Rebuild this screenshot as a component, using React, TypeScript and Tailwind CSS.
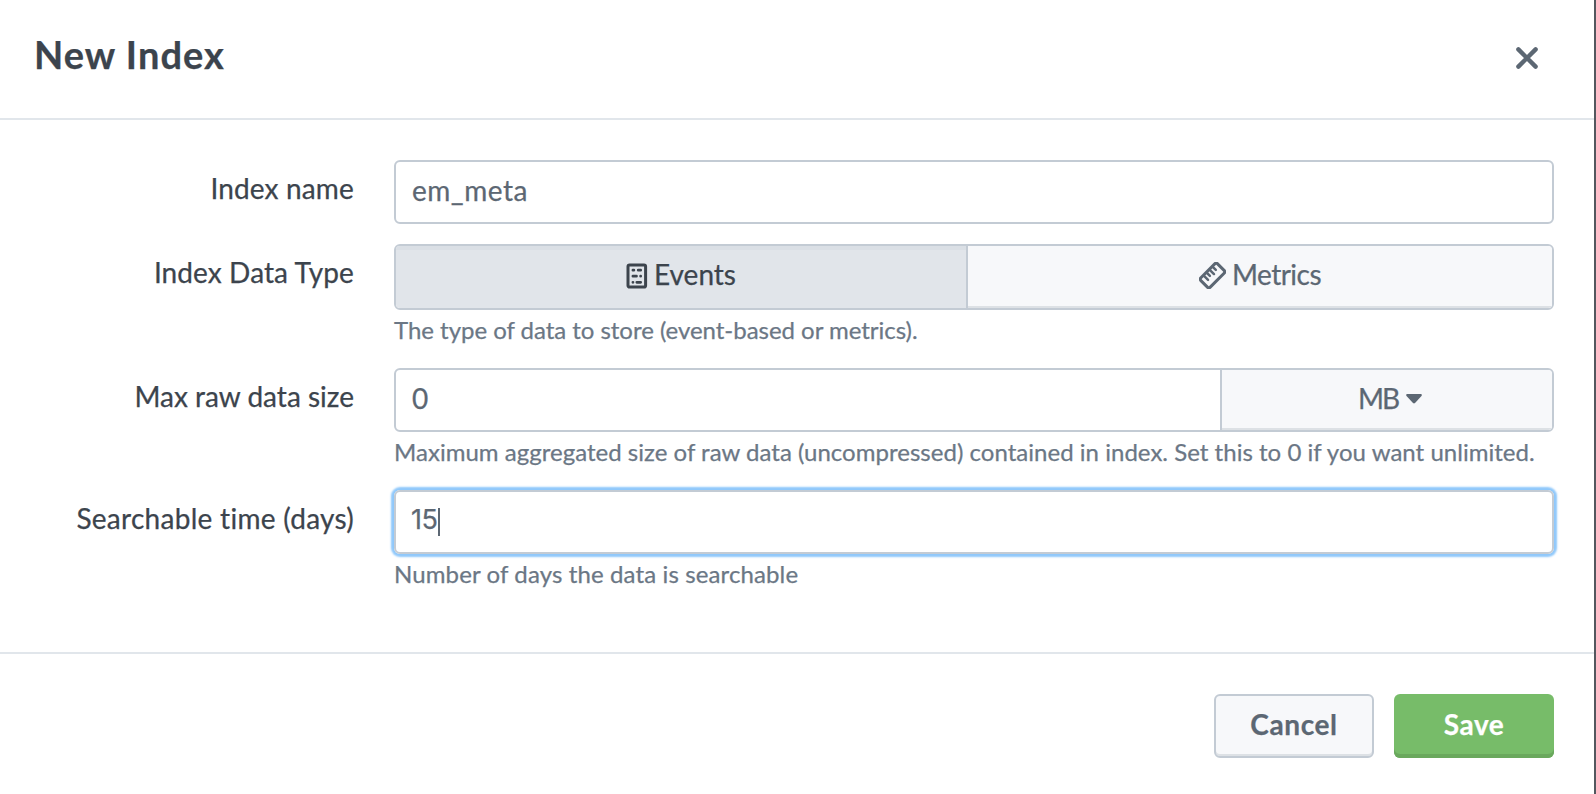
import type { ReactNode } from "react";

function EventsIcon() {
  return (
    <svg width="22" height="26" viewBox="0 0 22 26" fill="none" stroke="currentColor" className="mb-[3px] shrink-0">
      <rect x="2" y="1.9" width="17.6" height="22.2" rx="1.6" strokeWidth="3" />
      <g strokeWidth="2.7" strokeLinecap="round">
        <path d="M6.9 7.2h1M12.2 7.2h2.5M6.9 13.2h3.6M14.6 13.2h.1M6.9 19.3h.1M10.8 19.3h3.9" />
      </g>
    </svg>
  );
}

function MetricsIcon() {
  return (
    <svg width="27" height="27" viewBox="0 0 27 27" fill="none" stroke="currentColor" className="mb-[3px] shrink-0">
      <g transform="rotate(-45 13.5 13.5)">
        <rect x="1.7" y="6.9" width="23.6" height="13.2" rx="2" strokeWidth="3" />
        <path d="M7.2 7.5v6M11.4 7.5v4.4M15.6 7.5v6M19.8 7.5v4.4" strokeWidth="2.5" strokeLinecap="round" />
      </g>
    </svg>
  );
}

function Row({ label, labelClass, help, helpClass, children }: { label: string; labelClass: string; help?: string; helpClass?: string; children: ReactNode }) {
  return (
    <div className="flex">
      <div className="mr-10 w-[354px] shrink-0 whitespace-nowrap text-right leading-[56px] text-[#3c444d]">
        <span className={labelClass}>{label}</span>
      </div>
      <div className="w-[1160px] shrink-0">
        {children}
        {help && (
          <p className={`h-[38px] whitespace-nowrap text-2xl leading-[39px] text-[#6b7785] ${helpClass}`}>{help}</p>
        )}
      </div>
    </div>
  );
}

export default function App() {
  return (
    <div className="flex h-[794px] w-[1596px] overflow-hidden border-r-2 border-[#53575e] bg-white font-['Lato',sans-serif] text-[28px] text-[#5c6773] [-webkit-text-stroke:0.25px] [font-variant-ligatures:none]">
      <div className="flex w-full flex-col">
        <header className="flex h-[120px] shrink-0 items-start justify-between border-b-2 border-[#e1e6eb] pl-[34px] pr-14">
          <h1 className="pt-[30px] text-[38px] font-bold leading-[48px] tracking-[1.05px] text-[#3c444d]">New Index</h1>
          <button aria-label="Close" className="mt-[47px]">
            <svg width="22" height="22" viewBox="0 0 22 22" stroke="currentColor" strokeWidth="4.4" strokeLinecap="round">
              <path d="M2.4 2.4l17.2 17.2M19.6 2.4L2.4 19.6" />
            </svg>
          </button>
        </header>

        <main className="flex h-[534px] shrink-0 flex-col gap-5 border-b-2 border-[#e1e6eb] pt-10">
          <Row label="Index name" labelClass="tracking-[0.15px]">
            <div className="flex h-16 items-center rounded-md border-2 border-[#c3cbd4] px-4 pb-[5px] tracking-[0.5px]">em_meta</div>
          </Row>

          <Row label="Index Data Type" labelClass="tracking-[0.1px]" help="The type of data to store (event-based or metrics)." helpClass="tracking-[-0.03px]">
            <div className="flex h-[66px] overflow-hidden rounded-md border-2 border-[#c3cbd4]">
              <button className="flex w-[570px] items-center justify-center gap-1.5 bg-[#e1e5ea] text-[#3c444d] shadow-[inset_0_4px_0_#dadfe5]">
                <EventsIcon />
                <span className="pb-[6px]">Events</span>
              </button>
              <button className="flex flex-1 items-center justify-center gap-1.5 border-l-2 border-[#c3cbd4] bg-[#f7f8fa] shadow-[inset_0_-2px_0_#dde1e5]">
                <MetricsIcon />
                <span className="pb-[6px] tracking-[-0.5px]">Metrics</span>
              </button>
            </div>
          </Row>

          <Row
            label="Max raw data size"
            labelClass="tracking-[0px]"
            help="Maximum aggregated size of raw data (uncompressed) contained in index. Set this to 0 if you want unlimited."
            helpClass="tracking-[0.025px]"
          >
            <div className="flex h-16 overflow-hidden rounded-md border-2 border-[#c3cbd4]">
              <div className="flex flex-1 items-center px-4 pb-[5px]">0</div>
              <button className="flex w-[332px] items-center justify-center gap-2 border-l-2 border-[#c3cbd4] bg-[#f7f8fa] pl-1.5 shadow-[inset_0_-2px_0_#dde1e5]">
                <span className="pb-[5px] tracking-[-2px]">MB</span>
                <svg width="16" height="10" viewBox="0 0 16 10" fill="currentColor" className="mb-0.5">
                  <path d="M1.4 0h13.2c1.1 0 1.6 1.1.9 1.9L9 9c-.6.6-1.4.6-2 0L.5 1.9C-.2 1.1.3 0 1.4 0z" />
                </svg>
              </button>
            </div>
          </Row>

          <Row label="Searchable time (days)" labelClass="tracking-[0.28px]" help="Number of days the data is searchable" helpClass="tracking-[0.12px]">
            <div className="flex h-16 items-center rounded-md border-2 border-[#c3cbd4] px-4 shadow-[0_0_2px_3px_#8fc8fb]">
              <span className="-ml-px w-[27px] pb-[3px] font-['Inter',sans-serif] text-[27px] tracking-[-0.5px]">15</span>
              <span className="h-7 w-0.5 bg-[#5c6773]" />
            </div>
          </Row>
        </main>

        <footer className="flex justify-end gap-5 pr-10 pt-10 font-bold">
          <button className="h-16 w-40 rounded-md border-2 border-[#c3cbd4] bg-[#f7f8fa] pb-[5px] tracking-[0.6px] shadow-[inset_0_-2px_0_#dde1e5]">Cancel</button>
          <button className="h-16 w-40 rounded-md bg-[#77bc69] pb-[5px] tracking-[0.5px] text-white shadow-[inset_0_-4px_0_#6aa85d]">Save</button>
        </footer>
      </div>
    </div>
  );
}
